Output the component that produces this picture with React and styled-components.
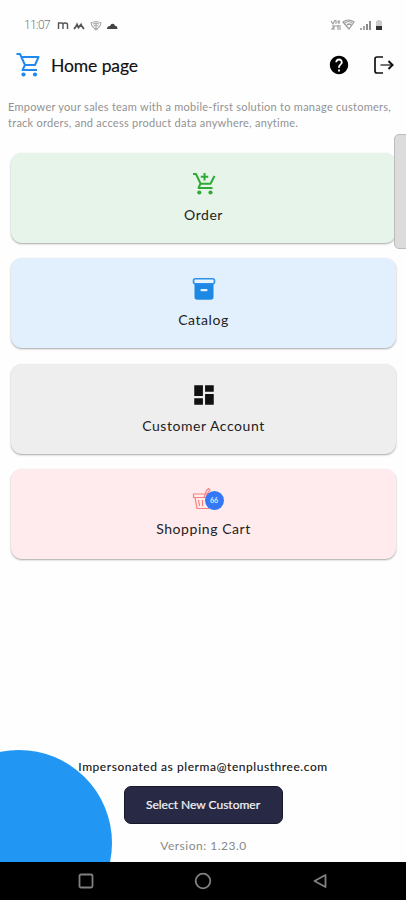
import React from "react";
import styled, { createGlobalStyle } from "styled-components";
import { MdDashboard, MdHelp } from "react-icons/md";

const GlobalStyle = createGlobalStyle`
* { box-sizing: border-box; }
body {
    margin: 0;
    background: #fefefe;
    font-family: Lato, "Open Sans", sans-serif;
}
`

const CartIcon = () => (
    <svg width="26" height="26" viewBox="0 0 26 26" fill="none" stroke="#2188ef" strokeWidth="2" strokeLinejoin="round">
        <path d="M1.500 2H5L10 13L7.500 18H22" />
        <path d="M6.500 5H23.500L20 13H10" />
        <circle cx="8.500" cy="22.500" r="2.100" fill="#2188ef" stroke="none" />
        <circle cx="20" cy="22.500" r="2.100" fill="#2188ef" stroke="none" />
    </svg>
)

const OrderIcon = () => (
    <svg width="26" height="26" viewBox="0 0 26 26" fill="none" stroke="#2eaa35" strokeWidth="2" strokeLinejoin="round">
        <path d="M2 3H5L9.500 12.500L7.500 17H21.500" />
        <path d="M9.500 12.800H19.500L23.500 5" />
        <path d="M13.500 2V9.500M9.800 5.800H17.200" />
        <circle cx="8.300" cy="21.500" r="2.100" fill="#2eaa35" stroke="none" />
        <circle cx="19.500" cy="21.500" r="2.100" fill="#2eaa35" stroke="none" />
    </svg>
)

const LogoutIcon = () => (
    <svg width="20" height="18" viewBox="0 0 20 18" fill="none">
        <path d="M9 1H3Q1 1 1 3V15Q1 17 3 17H9" stroke="#111" strokeWidth="1.7" />
        <path d="M6.5 9H18" stroke="#444" strokeWidth="1.500" />
        <path d="M14.5 5L18.500 9L14.5 13" stroke="#111" strokeWidth="2" />
    </svg>
)

const CatalogIcon = () => (
    <svg width="24" height="24" viewBox="0 0 24 24">
        <path d="M2.500 7H21.500V20Q21.500 22.800 18.700 22.800H5.300Q2.500 22.800 2.500 20Z" fill="#1e88e5" />
        <rect x="1.500" y="1.800" width="21" height="5" rx="2" fill="#e9f4fe" stroke="#2a90ec" strokeWidth="1.6" />
        <rect x="8.500" y="12" width="7" height="2.200" rx="0.8" fill="#e3f1fd" />
    </svg>
)

const BasketIcon = () => (
    <svg width="24" height="24" viewBox="0 0 24 24" fill="none" stroke="#f5827f" strokeWidth="1.2">
        <path d="M1.500 7H19V10.500H1.500Z" />
        <path d="M3 10.500L5 21.500H17M6.500 13L7.500 19M10.500 13V19" />
        <path d="M12 10.500L14.500 3.500L16.500 1.500L18 3L16 5.500L14 10.500" />
    </svg>
)

const StatusIcons = () => (
    <svg width="62" height="12" viewBox="0 0 62 12" fill="none" stroke="#555">
        <path d="M1.500 10V4H5Q6 4 6 5.500V10M6 5.500Q6 4 8 4Q10.500 4 10.500 5.500V10" strokeWidth="1.4" />
        <path d="M17 10Q19 8 20 5.500L21.500 8.500L24 5.500Q25 8 27 10" strokeWidth="1.8" />
        <g stroke="#aaa" strokeWidth="1.100">
            <path d="M34 4Q39 1 44 4L43 7L39 11L35 7ZM36 5Q39 3 42 5M37 7Q39 5 41 7M39 4V10" />
        </g>
        <path d="M50 10Q50 7 53 7Q54 4 57 5Q57.500 7 60 7.500L60.500 10Z" fill="#444" stroke="none" />
    </svg>
)

const SignalIcons = () => (
    <svg width="54" height="12" viewBox="0 0 54 12" fill="none" stroke="#999">
        <path d="M1 2L3 5L5 1M6 1V5M9 1V5M7 3H10M2 7H5L2 10H5M8 6V11M10 6V11M6 7H9" strokeWidth="1.1" />
        <path d="M13 3Q18.500 -1 24 3L19 10ZM15 4Q18.500 1 22 4M17 6Q19 4 21 6" strokeWidth="1.2" />
        <path d="M31 11V9M34 11V7" strokeWidth="1.700" />
        <path d="M37 11V5M40 11V2" stroke="#777" strokeWidth="1.700" />
        <path d="M47.500 1H50.500V2H52V8H46V2H47.500Z" fill="#ccc" stroke="none" />
        <path d="M46 7H52V11H46Z" fill="#333" stroke="none" />
    </svg>
)

const App = () => {
    return (
        <Screen>
            <GlobalStyle />
            <StatusBar>
                <Clock>11:07</Clock>
                <StatusIcons />
                <Spacer />
                <SignalIcons />
            </StatusBar>
            <Header>
                <CartIcon />
                <Title>Home page</Title>
                <Spacer />
                <MdHelp size={22} color="#000" />
                <LogoutIcon />
            </Header>
            <Intro>
                <Line $spacing="0.26px">Empower your sales team with a mobile-first solution to manage customers,</Line>
                <Line $spacing="0.26px">track orders, and access product data anywhere, anytime.</Line>
            </Intro>
            <Menu>
                <Card $bg="#e7f4ea">
                    <OrderIcon />
                    <Label>Order</Label>
                </Card>
                <Card $bg="#e2f0fd">
                    <CatalogIcon />
                    <Label>Catalog</Label>
                </Card>
                <Card $bg="#eeeeee">
                    <MdDashboard size={26} color="#111" />
                    <Label>Customer Account</Label>
                </Card>
                <Card $bg="#ffebed" $lift="2px">
                    <CartBox>
                        <BasketIcon />
                        <Badge>66</Badge>
                    </CartBox>
                    <Label>Shopping Cart</Label>
                </Card>
            </Menu>
            <Footer>
                <Circle />
                <Account>Impersonated as plerma@tenplusthree.com</Account>
                <SelectButton>Select New Customer</SelectButton>
                <Version>Version: 1.23.0</Version>
            </Footer>
            <NavBar>
                <svg width="16" height="16" viewBox="0 0 16 16" fill="none" stroke="#808080" strokeWidth="1.8">
                    <rect x="1.500" y="1.500" width="13" height="13" rx="1.500" />
                </svg>
                <svg width="18" height="18" viewBox="0 0 18 18" fill="none" stroke="#808080" strokeWidth="1.8">
                    <circle cx="9" cy="9" r="7.300" />
                </svg>
                <svg width="16" height="16" viewBox="0 0 16 16" fill="none" stroke="#808080" strokeWidth="1.800" strokeLinejoin="round">
                    <path d="M13.500 2V14L2.500 8Z" />
                </svg>
            </NavBar>
            <ScrollThumb />
        </Screen>
    )
}

export default App

const Screen = styled('div')`
position: relative;
width: 406px;
height: 900px;
display: flex;
flex-direction: column;
overflow: hidden;
background: #fefefe;
`
const StatusBar = styled('div')`
display: flex;
align-items: center;
height: 42px;
padding: 8px 22px 0 24px;
`
const Clock = styled('div')`
width: 33px;
font-family: Roboto, sans-serif;
font-size: 12px;
font-weight: 300;
letter-spacing: -0.6px;
color: #777;
`
const Spacer = styled('div')`
flex: 1;
`
const Header = styled('div')`
display: flex;
align-items: center;
height: 48px;
padding: 0 12px 2px 15px;

svg:last-child {
    margin-left: 24px;
}
`
const Title = styled('div')`
margin-left: 10px;
font-size: 17.5px;
letter-spacing: -0.1px;
color: #111;
-webkit-text-stroke: 0.15px #111;
`
const Intro = styled('div')`
height: 63px;
padding: 9px 0 0 8px;
`
const Line = styled('div')`
width: max-content;
font-size: 11px;
line-height: 16px;
letter-spacing: ${({ $spacing }) => $spacing};
white-space: nowrap;
color: #929292;
`
const Menu = styled('div')`
display: flex;
flex-direction: column;
gap: 15.3px;
padding: 0 10px 0 11px;
`
const Card = styled('div')`
display: flex;
flex-direction: column;
align-items: center;
justify-content: center;
gap: 8px;
height: 90px;
padding-bottom: ${({ $lift }) => $lift || "0"};
border-radius: 11px;
background: ${({ $bg }) => $bg};
box-shadow: 0 1px 2px rgba(0, 0, 0, 0.35);

> svg {
    height: 26px;
}
`
const Label = styled('div')`
font-size: 14px;
line-height: 20px;
letter-spacing: 0.55px;
color: #222;
`
const CartBox = styled('div')`
position: relative;
width: 24px;
height: 24px;
`
const Badge = styled('div')`
position: absolute;
left: 13px;
top: 4px;
width: 19px;
height: 19px;
border-radius: 50%;
background: #3478f6;
color: #dfeaff;
font-size: 7px;
font-weight: 700;
line-height: 19px;
text-align: center;
`
const Footer = styled('div')`
position: relative;
display: flex;
flex-direction: column;
align-items: center;
height: 112px;
margin-top: auto;
overflow: hidden;
`
const Circle = styled('div')`
position: absolute;
left: -74px;
top: 0;
width: 186px;
height: 186px;
border-radius: 50%;
background: #2196f3;
`
const Account = styled('div')`
position: relative;
margin-top: 9px;
font-size: 12px;
line-height: 16px;
letter-spacing: 0.56px;
color: #111;
-webkit-text-stroke: 0.1px #111;
`
const SelectButton = styled('button')`
width: 159px;
height: 38px;
margin-top: 11px;
padding: 0 0 2px;
border: 1px solid #17182b;
border-radius: 7px;
background: #282a45;
color: #f4f4f7;
font-family: inherit;
font-size: 12px;
letter-spacing: 0;
-webkit-text-stroke: 0.2px #f4f4f7;
`
const Version = styled('div')`
margin-top: 14px;
padding-left: 1px;
font-size: 12px;
line-height: 16px;
letter-spacing: 0.5px;
color: #888;
`
const NavBar = styled('div')`
display: flex;
align-items: center;
justify-content: space-between;
height: 38px;
padding: 0 78px;
background: #000;
`
const ScrollThumb = styled('div')`
position: absolute;
left: 394px;
top: 134px;
width: 16px;
height: 115px;
border: 1px solid #bcbcbc;
border-radius: 5px;
background: #dcdcdc;
`
